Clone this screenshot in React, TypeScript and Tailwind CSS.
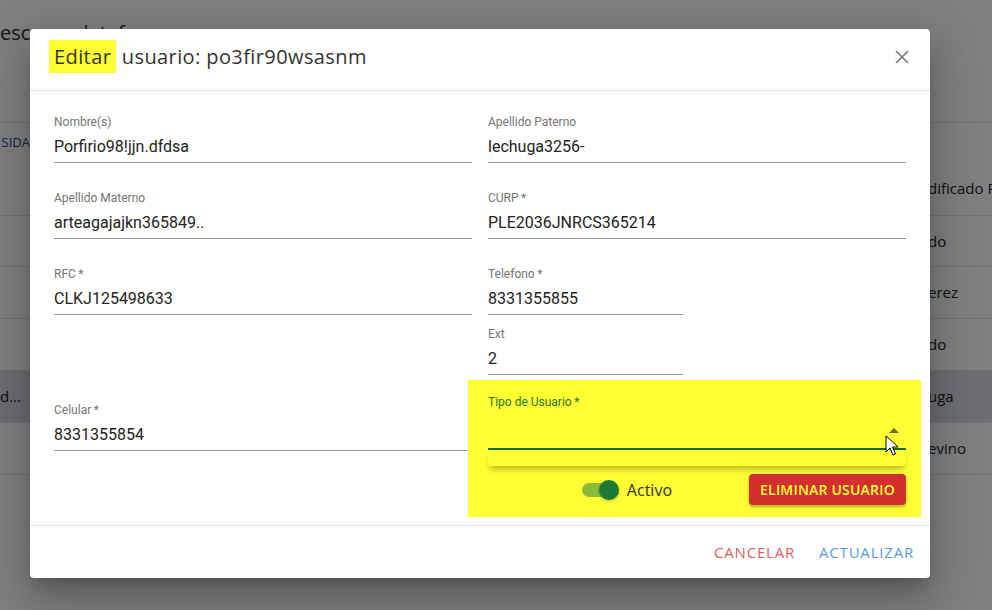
import React from 'react';

const head = "font-['Open_Sans',sans-serif]";
const body = "font-['Roboto',sans-serif]";

function Field({ label, value, className = '' }: { label: string; value: string; className?: string }) {
  return (
    <div className={`${body} ${className}`}>
      <div className="h-[14px] text-[12px] leading-[14px] text-[#757575]">{label}</div>
      <div className="mt-[8px] border-b border-[#949494] pb-[6px] text-[16px] leading-[19px] text-[#222]">{value}</div>
    </div>
  );
}

function Backdrop() {
  const rows = [
    { h: 'h-[93px]', left: 'SIDA', right: 'dificado P', head: true, hl: false },
    { h: 'h-[51px]', left: '', right: 'do', head: false, hl: false },
    { h: 'h-[52px]', left: '', right: 'erez', head: false, hl: false },
    { h: 'h-[52px]', left: '', right: 'do', head: false, hl: false },
    { h: 'h-[52px]', left: 'd...', right: 'uga', head: false, hl: true },
    { h: 'h-[52px]', left: '', right: 'evino', head: false, hl: false },
  ];
  return (
    <div className={`${head} h-[610px] w-full overflow-hidden bg-white`}>
      <div className="flex h-[122px] items-start pt-[21px] text-[20px] leading-[24px] text-[#333]">
        <span>esc</span>
        <span className="ml-[41px]">plataforma</span>
      </div>
      <div className="border-t border-[#e4e4e4]">
        {rows.map((r, i) => (
          <div
            key={i}
            className={`flex justify-between border-b border-[#e4e4e4] text-[15px] text-[#222] ${r.h} ${r.hl ? 'bg-[#d9dde4]' : ''}`}
          >
            <div className={`flex w-[30px] justify-end ${r.head ? 'items-start pt-[10px] text-[#1d4f9a]' : 'items-center'}`}>
              <span className={r.head ? 'text-[13px]' : 'w-[30px] text-left'}>{r.left}</span>
            </div>
            <div className={`flex w-[64px] overflow-hidden ${r.head ? 'items-start pt-[54px]' : 'items-center'}`}>
              <span className="whitespace-nowrap">{r.right}</span>
            </div>
          </div>
        ))}
      </div>
    </div>
  );
}

export default function App() {
  return (
    <div className="relative h-[610px] w-[992px] overflow-hidden">
      <Backdrop />
      <div className="absolute inset-0 bg-black/50" />

      <div className="absolute left-[30px] top-[29px] flex w-[900px] flex-col rounded-[4px] bg-white shadow-[0_11px_15px_-7px_rgba(0,0,0,0.2),0_24px_38px_3px_rgba(0,0,0,0.14),0_9px_46px_8px_rgba(0,0,0,0.12)]">
        {/* header */}
        <div className="flex h-[62px] items-start justify-between border-b border-[#e2e2e2] pl-[19px] pr-[21px]">
          <h2 className={`${head} mt-[11px] text-[20px] leading-[33px] tracking-[0.4px] text-[#333]`}>
            <span className="inline-block bg-[#ffff33] px-[5px]">Editar</span> usuario: po3fir90wsasnm
          </h2>
          <button className="mt-[21px] text-[#777]">
            <svg width="14" height="14" viewBox="0 0 14 14" stroke="currentColor" strokeWidth="1.6">
              <path d="M1 1L13 13M13 1L1 13" />
            </svg>
          </button>
        </div>

        {/* body */}
        <div className="flex gap-[16px] px-[24px] pb-[8px] pt-[24px]">
          <div className="flex w-[418px] flex-col">
            <Field label="Nombre(s)" value="Porfirio98!jjn.dfdsa" />
            <Field className="mt-[28px]" label="Apellido Materno" value="arteagajajkn365849.." />
            <Field className="mt-[28px]" label={'RFC\u2009*'} value="CLKJ125498633" />
            <Field className="mt-[88px]" label={'Celular\u2009*'} value="8331355854" />
          </div>
          <div className="flex w-[418px] flex-col">
            <Field label="Apellido Paterno" value="lechuga3256-" />
            <Field className="mt-[28px]" label={'CURP\u2009*'} value="PLE2036JNRCS365214" />
            <Field className="mt-[28px] w-[195px]" label={'Telefono\u2009*'} value="8331355855" />
            <Field className="mt-[12px] w-[195px]" label="Ext" value="2" />

            <div className="relative -ml-[20px] -mr-[15px] mt-[5px] bg-[#ffff33] pb-[12px] pl-[20px] pr-[15px] pt-[15px]">
              <div className={`${body} h-[14px] text-[12px] leading-[14px] text-[#25781c]`}>{'Tipo de Usuario\u2009*'}</div>
              <div className="relative h-[41px] border-b-2 border-[#1c6b1c]">
                <svg className="absolute right-0 top-[10px] text-[#6b6b2e]" width="24" height="24" viewBox="0 0 24 24" fill="currentColor">
                  <path d="M7 14l5-5 5 5z" />
                </svg>
              </div>
              <div className="h-[16px] rounded-b-[4px] bg-[#ffff33] shadow-[0_5px_6px_-2px_rgba(0,0,0,0.3)]" />
              <div className="mt-[8px] flex items-center justify-end">
                <div className="flex items-center gap-[8px]">
                  <div className="relative h-[20px] w-[37px]">
                    <div className="absolute left-0 top-[3px] h-[14px] w-[34px] rounded-full bg-[#8cbd3a]" />
                    <div className="absolute left-[17px] top-0 h-[20px] w-[20px] rounded-full bg-[#1c7a36] shadow-[0_1px_3px_rgba(0,0,0,0.3)]" />
                  </div>
                  <span className={`${head} text-[16px] text-[#333]`}>Activo</span>
                </div>
                <button className={`${head} ml-[77px] h-[31px] w-[157px] rounded-[4px] bg-[#d32f2f] text-[14px] font-semibold tracking-[0.2px] text-[#ffff33] shadow-[0_2px_3px_rgba(0,0,0,0.3)]`}>
                  ELIMINAR USUARIO
                </button>
              </div>

              {/* mouse pointer */}
              <svg className="absolute left-[417px] top-[55px]" width="14" height="22" viewBox="0 0 14 22">
                <path d="M1 1L1 17L5 13L8 20L10.5 19L7.5 12L13 12Z" fill="white" stroke="black" strokeWidth="1" strokeLinejoin="round" />
              </svg>
            </div>
          </div>
        </div>

        {/* footer */}
        <div className="flex h-[53px] items-center justify-end gap-[8px] border-t border-[#e2e2e2] px-[8px]">
          <button className={`${head} px-[8px] py-[6px] text-[15px] tracking-[0.8px] text-[#e35d5d]`}>CANCELAR</button>
          <button className={`${head} px-[8px] py-[6px] text-[15px] tracking-[0.8px] text-[#5b9be6]`}>ACTUALIZAR</button>
        </div>
      </div>
    </div>
  );
}
